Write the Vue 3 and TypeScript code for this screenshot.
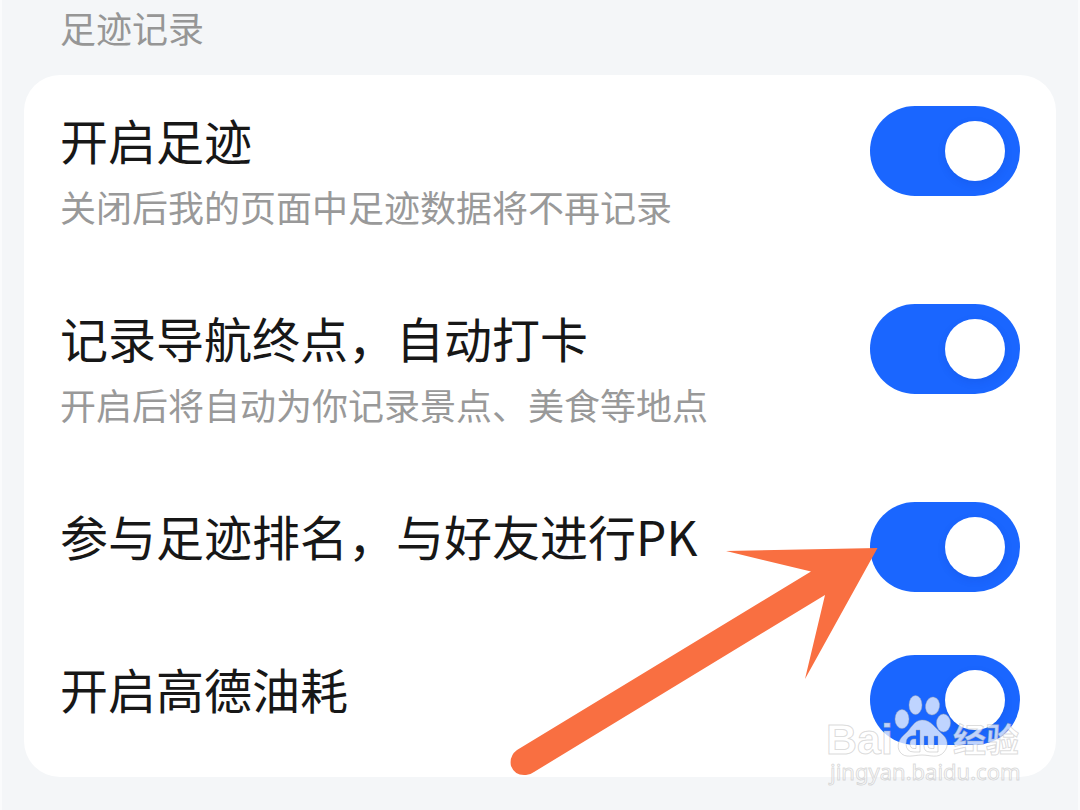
<script setup lang="ts">
import { reactive } from 'vue'

interface Setting {
  id: string
  title: string
  description?: string
  enabled: boolean
}

const settings = reactive<Setting[]>([
  { id: 'footprint', title: '开启足迹', description: '关闭后我的页面中足迹数据将不再记录', enabled: true },
  { id: 'checkin', title: '记录导航终点，自动打卡', description: '开启后将自动为你记录景点、美食等地点', enabled: true },
  { id: 'ranking', title: '参与足迹排名，与好友进行PK', enabled: true },
  { id: 'fuel', title: '开启高德油耗', enabled: true },
])
</script>

<template>
  <main class="page">
    <h1 class="heading">足迹记录</h1>
    <section class="card">
      <div v-for="item in settings" :key="item.id" class="row" :class="{ detailed: item.description }">
        <div class="copy">
          <label class="title" :for="item.id">{{ item.title }}</label>
          <p v-if="item.description" :id="item.id + '-desc'" class="description">{{ item.description }}</p>
        </div>
        <input
          :id="item.id"
          v-model="item.enabled"
          class="switch"
          type="checkbox"
          role="switch"
          :aria-describedby="item.description ? item.id + '-desc' : undefined"
        />
      </div>

      <svg class="arrow" width="370" height="232" viewBox="510 545 370 232" aria-hidden="true">
        <path
          d="M877.500 548 L726 551 L811 571.500 L517 750 Q509 756 511 766 Q515 776 526 775 Q530 775 534 772 L825 595 L805 679 Z"
          fill="#f96f41"
        />
      </svg>

      <svg class="watermark" width="210" height="100" viewBox="820 690 210 100" role="img" aria-label="Baidu 经验">
        <g class="mark">
          <ellipse cx="902" cy="719" rx="7" ry="9.500" />
          <ellipse cx="915.500" cy="705" rx="6.500" ry="9.500" />
          <ellipse cx="932.500" cy="706" rx="7" ry="9" transform="rotate(10 932.5 706)" />
          <ellipse cx="943.500" cy="723" rx="7" ry="9" />
          <path
            fill-rule="evenodd"
            d="M922 720 C931 720 935 728 942 734 C948 739 949 746 944 752 C938 759 930 755 922 755 C914 755 905 759 900 752 C896 746 899 739 905 734 C911 729 914 720 922 720 Z
            M916 730 V735.500 Q906 734.500 906 743.500 Q906 752 914 752 H920 V730 Z M916 739 V748.500 H914 Q910 748.500 910 743.500 Q910 739 914 739 Z
            M924 736 V746 Q924 752 930 752 H938 V736 H934 V748.500 H931 Q928 748.500 928 746 V736 Z"
          />
          <text class="latin" x="826" y="754">Bai</text>
          <text class="cjk" x="953" y="752">经验</text>
          <text class="url" x="830" y="780">jingyan.baidu.com</text>
        </g>
      </svg>
    </section>
  </main>
</template>

<style>
body {
  background: #f4f6f8;
}
</style>

<style scoped>
.page {
  box-sizing: border-box;
  min-height: 100vh;
  padding: 0 22px 33px;
  border: solid #fafbfc;
  border-width: 0 2px;
  background: #f4f6f8;
  color: #171717;
  font-family: 'Noto Sans CJK SC', 'Noto Sans', sans-serif;
}

.heading {
  margin: 0;
  padding: 0 36px 21px;
  color: #969696;
  font-size: 36px;
  font-weight: 400;
  line-height: 54px;
}

.card {
  position: relative;
  border-radius: 36px;
  background: #fff;
}

.row {
  display: flex;
  align-items: flex-start;
  justify-content: space-between;
  gap: 24px;
  padding: 31px 36px 32px;
}

.row.detailed {
  padding-bottom: 40px;
}

.copy {
  min-width: 0;
}

.title {
  display: block;
  font-size: 48px;
  line-height: 66px;
}

.description {
  margin: 7px 0 0;
  color: #999;
  font-size: 36px;
  line-height: 54px;
}

.switch {
  flex: none;
  box-sizing: border-box;
  width: 150px;
  height: 90px;
  margin: 0;
  padding: 15px;
  appearance: none;
  border-radius: 45px;
  background: #c9ccd1;
  cursor: pointer;
}

.switch::before {
  content: '';
  display: block;
  width: 60px;
  height: 60px;
  border-radius: 50%;
  background: #fff;
  box-shadow: 0 3px 8px rgba(0, 30, 120, 0.1);
}

.switch:checked {
  background: #1a66ff;
}

.switch:checked::before {
  margin-left: auto;
}

.arrow {
  position: absolute;
  right: 176px;
  bottom: 0;
  pointer-events: none;
}

.watermark {
  position: absolute;
  right: 26px;
  bottom: -13px;
  pointer-events: none;
}

.mark {
  fill: rgba(255, 255, 255, 0.72);
  stroke: rgba(165, 165, 165, 0.4);
  stroke-width: 1px;
}

.latin {
  font: 700 43px 'Liberation Sans', sans-serif;
}

.cjk {
  font: 700 33px 'Noto Sans CJK SC', sans-serif;
}

.url {
  font: 400 22px 'Noto Sans', sans-serif;
}
</style>
